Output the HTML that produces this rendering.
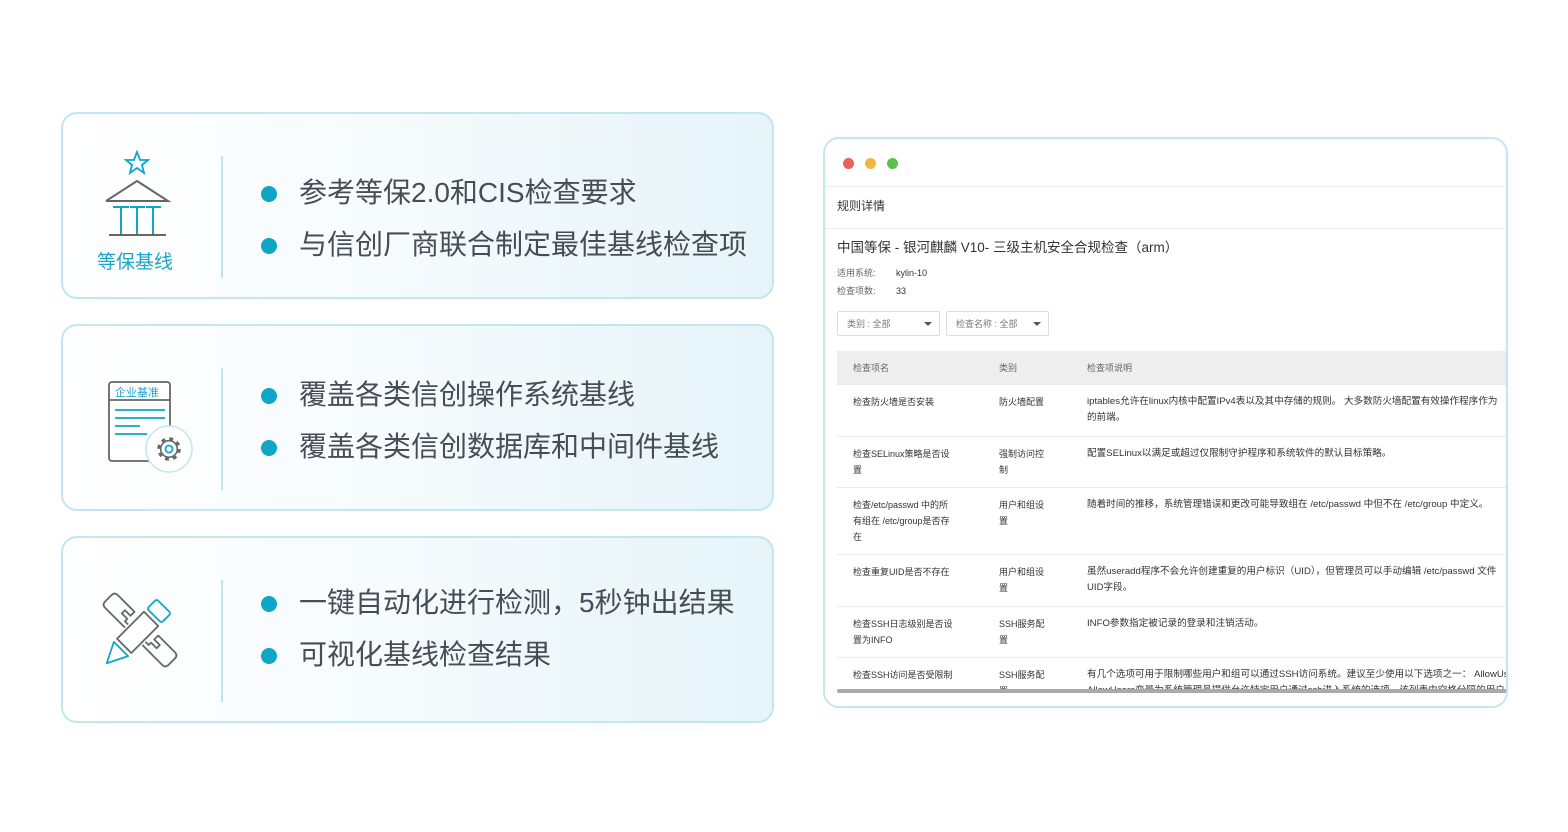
<!DOCTYPE html>
<html><head><meta charset="utf-8"><style>
*{margin:0;padding:0;box-sizing:border-box}
body{width:1568px;height:832px;background:#fff;position:relative;overflow:hidden;font-family:"Liberation Sans","Noto Sans CJK SC",sans-serif}
.card{position:absolute;left:61px;width:713px;height:187px;border:2px solid #c2e7f0;border-radius:16px;background:linear-gradient(90deg,#ffffff 0%,#f6fbfd 45%,#e6f4f9 100%)}
.div{position:absolute;left:158px;top:42px;width:2px;height:122px;background:#bfe5ef}
.li{position:absolute;left:236px;font-size:28px;color:#474d57;white-space:nowrap;line-height:34px}
.li:before{content:"";position:absolute;left:-38px;top:10px;width:16px;height:16px;border-radius:50%;background:#0ea5c6}
.win{position:absolute;left:823px;top:137px;width:685px;height:571px;border:2px solid #c2e7f0;border-radius:16px;background:#fff;overflow:hidden}
.t{position:absolute;font-size:10px;color:#333;white-space:nowrap;line-height:16px}
.d{font-size:9.6px!important}
.row{position:absolute;left:12px;width:680px;border-top:1px solid #ececec}
</style></head><body>

<div class="card" style="top:112px">
 <svg style="position:absolute;left:38px;top:32px" width="80" height="90" viewBox="0 0 80 90">
  <polygon points="36,6 39,14 47,14 41,19 43,27 36,22 29,27 31,19 25,14 33,14" fill="none" stroke="#0ea5c6" stroke-width="1.8"/>
  <polyline points="5,55 36,35 67,55 5,55" fill="none" stroke="#666" stroke-width="2"/>
  <g stroke="#0ea5c6" stroke-width="2"><line x1="12" y1="61" x2="28" y2="61"/><line x1="29" y1="61" x2="44" y2="61"/><line x1="45" y1="61" x2="60" y2="61"/><line x1="20" y1="61" x2="20" y2="88"/><line x1="36" y1="61" x2="36" y2="88"/><line x1="52" y1="61" x2="52" y2="88"/></g>
  <line x1="8" y1="89" x2="65" y2="89" stroke="#666" stroke-width="2"/>
 </svg>
 <div style="position:absolute;left:34px;top:133px;font-size:19px;color:#1ba5c8">等保基线</div>
 <div class="div"></div>
 <div class="li" style="top:62px">参考等保2.0和CIS检查要求</div>
 <div class="li" style="top:114px">与信创厂商联合制定最佳基线检查项</div>
</div>

<div class="card" style="top:324px">
 <svg style="position:absolute;left:44px;top:54px" width="90" height="96" viewBox="0 0 90 96">
  <rect x="2" y="2" width="61" height="79" rx="3" fill="#fff" stroke="#666" stroke-width="1.8"/>
  <line x1="2" y1="20" x2="63" y2="20" stroke="#666" stroke-width="1.8"/>
  <g stroke="#0ea5c6" stroke-width="1.8"><line x1="8" y1="30" x2="58" y2="30"/><line x1="8" y1="38" x2="58" y2="38"/><line x1="8" y1="46" x2="33" y2="46"/><line x1="8" y1="54" x2="40" y2="54"/></g>
  <circle cx="62" cy="69" r="23" fill="#fff" stroke="#c2e7f0" stroke-width="1.5"/>
  <circle cx="62" cy="69" r="10" fill="none" stroke="#666" stroke-width="3.5" stroke-dasharray="3.8 4.05"/>
  <circle cx="62" cy="69" r="8.3" fill="#fff" stroke="#666" stroke-width="1.6"/>
  <circle cx="62" cy="69" r="3.5" fill="none" stroke="#0ea5c6" stroke-width="1.8"/>
 </svg>
 <div style="position:absolute;left:52px;top:58px;font-size:11px;color:#1ba5c8">企业基准</div>
 <div class="div"></div>
 <div class="li" style="top:52px">覆盖各类信创操作系统基线</div>
 <div class="li" style="top:104px">覆盖各类信创数据库和中间件基线</div>
</div>

<div class="card" style="top:536px">
 <svg style="position:absolute;left:36px;top:52px" width="84" height="80" viewBox="0 0 84 80">
  <g transform="translate(41,40) rotate(-45) scale(1.12)">
   <g fill="none" stroke="#666" stroke-width="1.6" stroke-linejoin="round">
    <rect x="-20" y="-9" width="34" height="18" fill="#fff"/>
    <path d="M-8,-11 L-8,-36 Q-8,-40 -4,-40 L4,-40 Q8,-40 8,-36 L8,-15 L3,-15 L3,-22 L-1,-22 L-1,-15 L-4,-15 L-4,-11"/>
    <path d="M-8,11 L-8,36 Q-8,40 -4,40 L4,40 Q8,40 8,36 L8,15 L3,15 L3,22 L-1,22 L-1,15 L-4,15 L-4,11"/>
   </g>
   <g fill="none" stroke="#0ea5c6" stroke-width="1.6" stroke-linejoin="round">
    <rect x="18" y="-9" width="12" height="18" rx="2"/>
    <polygon points="-24,-9 -24,9 -42,0"/>
   </g>
  </g>
 </svg>
 <div class="div"></div>
 <div class="li" style="top:48px">一键自动化进行检测，5秒钟出结果</div>
 <div class="li" style="top:100px">可视化基线检查结果</div>
</div>

<div class="win">
 <div style="position:absolute;left:18px;top:19px;width:11px;height:11px;border-radius:50%;background:#e8605a"></div>
 <div style="position:absolute;left:40px;top:19px;width:11px;height:11px;border-radius:50%;background:#f0b63f"></div>
 <div style="position:absolute;left:62px;top:19px;width:11px;height:11px;border-radius:50%;background:#5ec04f"></div>
 <div style="position:absolute;left:0;top:47px;width:100%;border-top:1px solid #eee"></div>
 <div class="t" style="left:12px;top:59px;font-size:12px">规则详情</div>
 <div style="position:absolute;left:0;top:89px;width:100%;border-top:1px solid #eee"></div>
 <div class="t" style="left:12px;top:100px;font-size:13.5px;line-height:18px">中国等保 - 银河麒麟 V10- 三级主机安全合规检查（arm）</div>
 <div class="t" style="left:12px;top:126px;font-size:9px;color:#666">适用系统:</div><div class="t" style="left:71px;top:126px;font-size:9px">kylin-10</div>
 <div class="t" style="left:12px;top:144px;font-size:9px;color:#666">检查项数:</div><div class="t" style="left:71px;top:144px;font-size:9px">33</div>
 <div style="position:absolute;left:12px;top:172px;width:103px;height:25px;border:1px solid #ddd;border-radius:2px"><span class="t" style="left:9px;top:4px;font-size:9px;color:#777">类别 : 全部</span><span style="position:absolute;right:7px;top:10px;border:4px solid transparent;border-top-color:#555"></span></div>
 <div style="position:absolute;left:121px;top:172px;width:103px;height:25px;border:1px solid #ddd;border-radius:2px"><span class="t" style="left:9px;top:4px;font-size:9px;color:#777">检查名称 : 全部</span><span style="position:absolute;right:7px;top:10px;border:4px solid transparent;border-top-color:#555"></span></div>
 <div style="position:absolute;left:12px;top:212px;width:680px;height:33px;background:#eeeeee"></div>
 <div class="t" style="left:28px;top:221px;font-size:9px;color:#666">检查项名</div>
 <div class="t" style="left:174px;top:221px;font-size:9px;color:#666">类别</div>
 <div class="t" style="left:262px;top:221px;font-size:9px;color:#666">检查项说明</div>

 <div class="row" style="top:245px;height:52px"></div>
 <div class="t" style="left:28px;top:255px;font-size:9px">检查防火墙是否安装</div>
 <div class="t" style="left:174px;top:255px;font-size:9px">防火墙配置</div>
 <div class="t d" style="left:262px;top:255px">iptables允许在linux内核中配置IPv4表以及其中存储的规则。 大多数防火墙配置有效操作程序作为<br>的前端。</div>

 <div class="row" style="top:297px;height:52px"></div>
 <div class="t" style="left:28px;top:307px;font-size:9px">检查SELinux策略是否设<br>置</div>
 <div class="t" style="left:174px;top:307px;font-size:9px">强制访问控<br>制</div>
 <div class="t d" style="left:262px;top:307px">配置SELinux以满足或超过仅限制守护程序和系统软件的默认目标策略。</div>

 <div class="row" style="top:348px;height:67px"></div>
 <div class="t" style="left:28px;top:358px;font-size:9px">检查/etc/passwd 中的所<br>有组在 /etc/group是否存<br>在</div>
 <div class="t" style="left:174px;top:358px;font-size:9px">用户和组设<br>置</div>
 <div class="t d" style="left:262px;top:358px">随着时间的推移，系统管理错误和更改可能导致组在 /etc/passwd 中但不在 /etc/group 中定义。</div>

 <div class="row" style="top:415px;height:52px"></div>
 <div class="t" style="left:28px;top:425px;font-size:9px">检查重复UID是否不存在</div>
 <div class="t" style="left:174px;top:425px;font-size:9px">用户和组设<br>置</div>
 <div class="t d" style="left:262px;top:425px">虽然useradd程序不会允许创建重复的用户标识（UID），但管理员可以手动编辑 /etc/passwd 文件<br>UID字段。</div>

 <div class="row" style="top:467px;height:52px"></div>
 <div class="t" style="left:28px;top:477px;font-size:9px">检查SSH日志级别是否设<br>置为INFO</div>
 <div class="t" style="left:174px;top:477px;font-size:9px">SSH服务配<br>置</div>
 <div class="t d" style="left:262px;top:477px">INFO参数指定被记录的登录和注销活动。</div>

 <div class="row" style="top:518px;height:40px"></div>
 <div class="t" style="left:28px;top:528px;font-size:9px">检查SSH访问是否受限制</div>
 <div class="t" style="left:174px;top:528px;font-size:9px">SSH服务配<br>置</div>
 <div class="t d" style="left:262px;top:528px">有几个选项可用于限制哪些用户和组可以通过SSH访问系统。建议至少使用以下选项之一： AllowUsers<br>AllowUsers变量为系统管理员提供允许特定用户通过ssh进入系统的选项。该列表由空格分隔的用户</div>
 <div style="position:absolute;left:12px;top:550px;width:680px;height:4px;background:#aaa;border-radius:2px"></div>
 <div style="position:absolute;left:0;top:554px;width:100%;height:20px;background:#fff"></div>
</div>
</body></html>
